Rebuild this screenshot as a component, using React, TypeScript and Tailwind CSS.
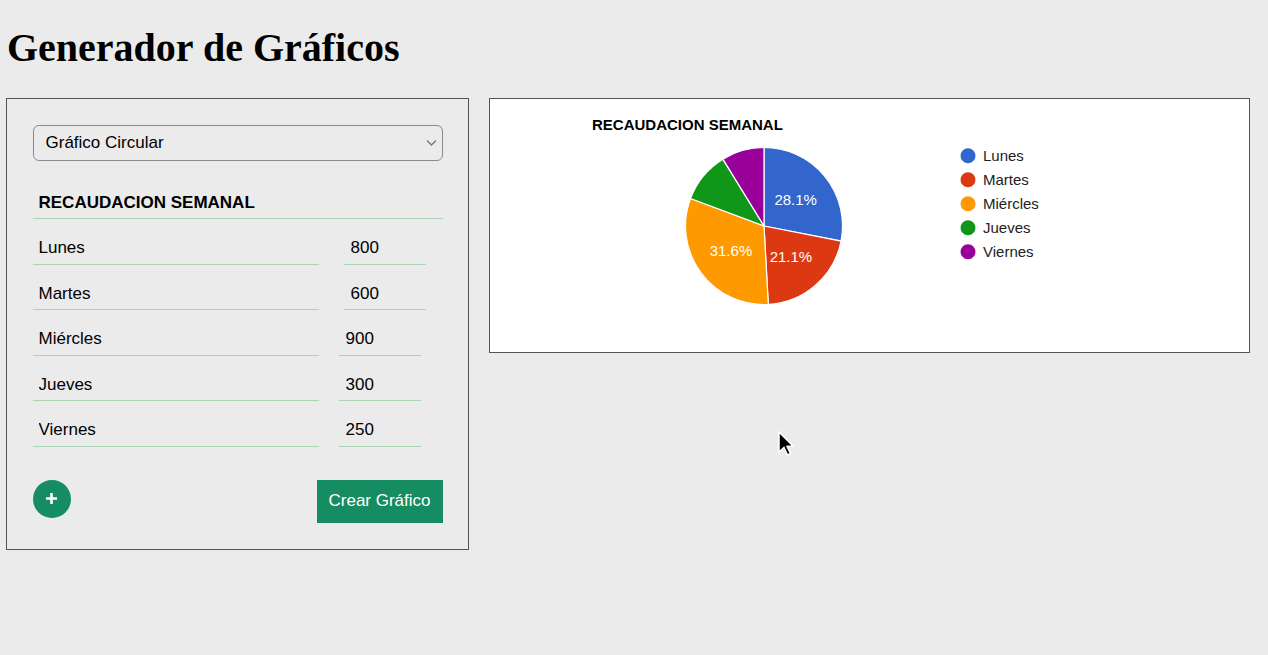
import React from 'react';

const DATA = [
  { label: 'Lunes', value: 800, color: '#3366cc', shift: true },
  { label: 'Martes', value: 600, color: '#dc3912', shift: true },
  { label: 'Miércles', value: 900, color: '#ff9900', shift: false },
  { label: 'Jueves', value: 300, color: '#109618', shift: false },
  { label: 'Viernes', value: 250, color: '#990099', shift: false },
];

const CX = 274;
const CY = 127;
const R = 78.5;

const point = (angle: number, r: number) => {
  const a = angle * 2 * Math.PI;
  return [CX + r * Math.sin(a), CY - r * Math.cos(a)];
};

const PieChart: React.FC = () => {
  const total = DATA.reduce((s, d) => s + d.value, 0);
  let acc = 0;
  const slices = DATA.map((d) => {
    const start = acc / total;
    acc += d.value;
    const end = acc / total;
    const [x1, y1] = point(start, R);
    const [x2, y2] = point(end, R);
    const large = end - start > 0.5 ? 1 : 0;
    const [lx, ly] = point((start + end) / 2, 41);
    return {
      ...d,
      pct: ((d.value / total) * 100).toFixed(1),
      frac: end - start,
      path: `M${CX},${CY} L${x1},${y1} A${R},${R} 0 ${large} 1 ${x2},${y2} Z`,
      lx,
      ly,
    };
  });

  return (
    <svg width="759" height="253" className="block" style={{ fontFamily: '"Liberation Sans", Arial, sans-serif' }}>
      <text x="102" y="30.5" fontSize="15" fontWeight="bold" fill="#000">
        RECAUDACION SEMANAL
      </text>
      {slices.map((s) => (
        <path key={s.label} d={s.path} fill={s.color} stroke="#fff" strokeWidth="1.2" />
      ))}
      {slices
        .filter((s) => s.frac > 0.15)
        .map((s) => (
          <text key={s.label + 'l'} x={s.lx} y={s.ly + 5.5} fontSize="15" fill="#fff" textAnchor="middle">
            {s.pct}%
          </text>
        ))}
      {DATA.map((d, i) => (
        <g key={d.label + 'g'}>
          <circle cx="478" cy={56.7 + i * 24} r="7.5" fill={d.color} />
          <text x="493" y={62 + i * 24} fontSize="15" fill="#222">
            {d.label}
          </text>
        </g>
      ))}
    </svg>
  );
};

export default function App() {
  return (
    <div
      className="relative min-h-[655px] bg-[#ebebeb] px-[6px] text-black"
      style={{ fontFamily: '"Liberation Sans", Arial, sans-serif' }}
    >
      <h1
        className="pt-[24px] pl-[1px] text-[40px] font-bold leading-[48px]"
        style={{ fontFamily: '"Liberation Serif", "Times New Roman", serif' }}
      >
        Generador de Gráficos
      </h1>

      <div className="mt-[26px] flex items-start gap-[20px]">
        {/* Form panel */}
        <div className="w-[463px] border-[1.5px] border-[#555] px-[25.5px] pt-[25.5px] pb-[26px]">
          <div className="relative h-[36px] rounded-[6px] border border-[#8a8a8a]">
            <div className="flex h-full items-center pl-[12px] text-[17px]">Gráfico Circular</div>
            <svg className="absolute right-[5px] top-[13px]" width="11" height="8" viewBox="0 0 11 8">
              <path d="M1 1.5 L5.5 6 L10 1.5" fill="none" stroke="#777" strokeWidth="1.3" />
            </svg>
          </div>

          <input
            readOnly
            value="RECAUDACION SEMANAL"
            className="mt-[25px] block h-[33px] w-full border-b border-[#acd5b6] bg-transparent pl-[6px] pt-[2px] text-[17px] font-bold outline-none"
          />

          <div className="mt-[10px] flex flex-col gap-[9.5px]">
            {DATA.map((d) => (
              <div key={d.label} className="flex">
                <input
                  readOnly
                  value={d.label}
                  className="h-[36px] w-[286px] border-b border-[#acd5b6] bg-transparent pl-[6px] pt-[4px] text-[17px] outline-none"
                />
                <input
                  readOnly
                  value={d.value}
                  className={`h-[36px] w-[82px] border-b border-[#acd5b6] bg-transparent pl-[7px] pt-[4px] text-[17px] outline-none ${
                    d.shift ? 'ml-[25px]' : 'ml-[20px]'
                  }`}
                />
              </div>
            ))}
          </div>

          <div className="mt-[33px] flex items-start justify-between">
            <button className="flex h-[38px] w-[38px] items-center justify-center rounded-full bg-[#168c63]">
              <svg width="13" height="13" viewBox="0 0 13 13">
                <path d="M6.5 1 V12 M1 6.5 H12" stroke="#fff" strokeWidth="2.6" />
              </svg>
            </button>
            <button className="h-[43px] w-[126px] bg-[#168c63] text-[17px] text-white">Crear Gráfico</button>
          </div>
        </div>

        {/* Chart panel */}
        <div className="w-[761px] border border-[#555] bg-white">
          <PieChart />
        </div>
      </div>

      {/* mouse cursor */}
      <svg className="absolute left-[777px] top-[430px]" width="18" height="28" viewBox="0 0 18 28">
        <path d="M2 2 L2 22 L7 17.5 L10.5 25 L13.5 23.5 L10 16.5 L16 16 Z" fill="#000" stroke="#fff" strokeWidth="1.5" />
      </svg>
    </div>
  );
}
